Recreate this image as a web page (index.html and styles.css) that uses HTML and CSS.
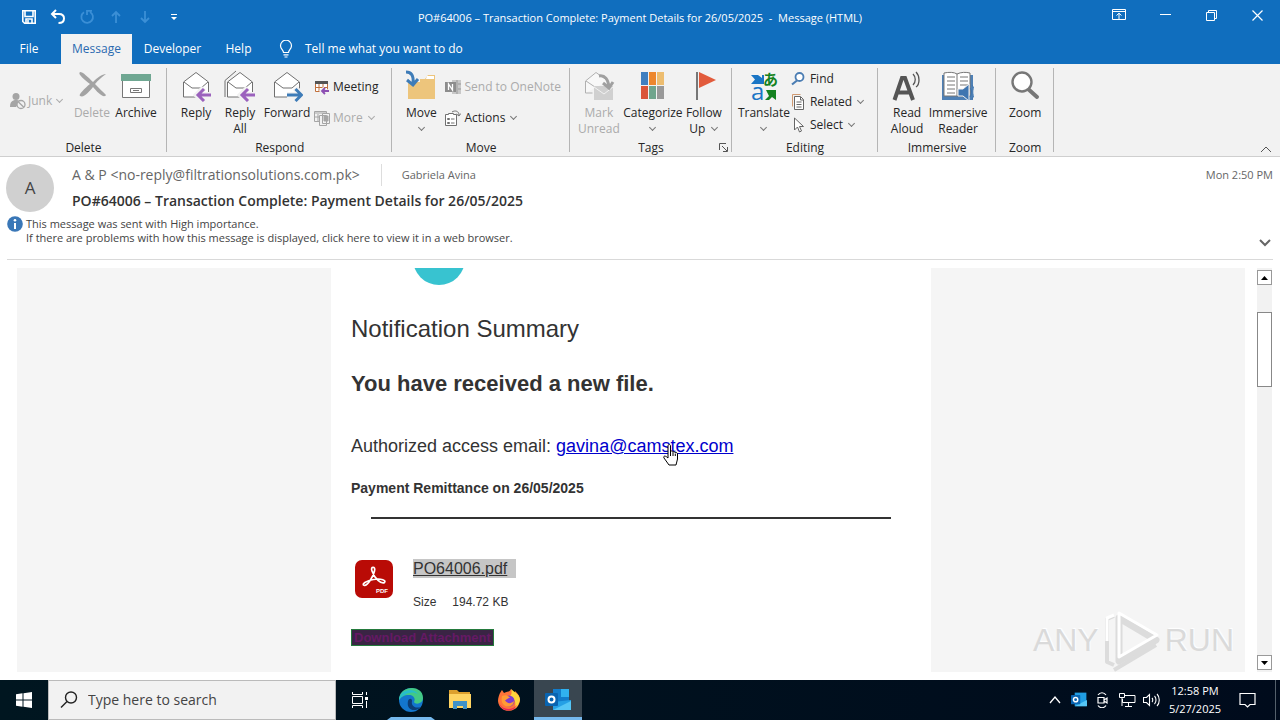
FILE: index.html
```html
<!DOCTYPE html>
<html lang="en">
<head>
<meta charset="utf-8">
<title>PO#64006 – Transaction Complete - Message (HTML)</title>
<link rel="stylesheet" href="styles.css">
</head>
<body>
<div class="window">
  <header class="titlebar">
    <div class="quick">
      <button aria-label="Save"><svg width="16" height="16" viewBox="0 0 16 16" fill="none" stroke="#fff" stroke-width="1.6"><path d="M1.8 1.8h12.4v12.4H3.6L1.8 12.4zM4 2v5.5h8V2M5 14v-4h6v4M7 11v3"/></svg></button>
      <button aria-label="Undo"><svg width="16" height="16" viewBox="0 0 16 16" fill="none" stroke="#fff" stroke-width="2"><path d="M6 1 2 5l4 4M2 5h7c3 0 5 1.800 5 4.500S12 14 8.500 14"/></svg></button>
      <button aria-label="Redo" disabled><svg width="16" height="16" viewBox="0 0 16 16" fill="none" stroke="#3b8fd6" stroke-width="1.800"><path d="M5 3.200A5.800 5.800 0 1 0 11 3M8 6V1.800h5"/></svg></button>
      <button aria-label="Previous item" disabled><svg width="16" height="16" viewBox="0 0 16 16" fill="none" stroke="#3b8fd6" stroke-width="1.800"><path d="M8 14V3M4 7l4-4 4 4"/></svg></button>
      <button aria-label="Next item" disabled><svg width="16" height="16" viewBox="0 0 16 16" fill="none" stroke="#3b8fd6" stroke-width="1.800"><path d="M8 2v11M4 9l4 4 4-4"/></svg></button>
      <button aria-label="Customize toolbar"><svg width="16" height="16" viewBox="0 0 16 16" fill="#fff"><path d="M5 5h6v1H5zM5 8h6l-3 3z"/></svg></button>
    </div>
    <h1 class="caption">PO#64006 – Transaction Complete: Payment Details for 26/05/2025 &nbsp;-&nbsp; Message (HTML)</h1>
    <div class="controls">
      <button aria-label="Ribbon display options"><svg width="14" height="12" viewBox="0 0 14 12" fill="none" stroke="#fff"><path d="M.5.5h13v10H.5zM.5 2.500h13M7 10V4.500M4.500 6.500 7 4.200l2.500 2.300"/></svg></button>
      <button aria-label="Minimize"><svg width="11" height="11" viewBox="0 0 11 11" stroke="#fff"><path d="M0 4.500h11"/></svg></button>
      <button aria-label="Restore"><svg width="11" height="11" viewBox="0 0 11 11" fill="none" stroke="#fff"><path d="M.5 2.500h8v8h-8zM2.500 2V.5h8v8H9"/></svg></button>
      <button aria-label="Close"><svg width="11" height="11" viewBox="0 0 11 11" stroke="#fff" stroke-width="1.200"><path d="m.5.5 10 10M10.500.5l-10 10"/></svg></button>
    </div>
  </header>

  <nav class="tabs">
    <button class="tab tab-file">File</button>
    <button class="tab tab-active">Message</button>
    <button class="tab tab-dev">Developer</button>
    <button class="tab tab-help">Help</button>
    <button class="tell"><svg width="14" height="18" viewBox="0 0 14 18" fill="none" stroke="#fff" stroke-width="1.200"><path d="M4.500 12.500c0-2.500-3-3.500-3-6.800a5.500 5.500 0 0 1 11 0c0 3.300-3 4.300-3 6.800zM4.500 14.800h5M5.500 17h3"/></svg><span>Tell me what you want to do</span></button>
  </nav>

  <section class="ribbon" aria-label="Ribbon">
    <div class="group">
      <div class="tools tools-delete">
        <button class="small junk" disabled><svg width="16" height="18" viewBox="0 0 16 18"><circle cx="6" cy="4.500" r="3.500" fill="#a5a5a5"/><path d="M0 15c0-5 2-7 6-7 2 0 3 .5 4 1.500L6 15z" fill="#a5a5a5"/><circle cx="11" cy="12.500" r="4" fill="#f2f2f2" stroke="#a5a5a5" stroke-width="1.300"/><path d="m8.200 9.700 5.600 5.600" stroke="#a5a5a5" stroke-width="1.300"/></svg><span>Junk</span><i class="chev"></i></button>
        <button class="big" disabled><svg width="32" height="32" viewBox="0 0 32 32"><path d="M4 2c3 0 8 5 13 10 4-4 9-8 13-8-4 3-8 6-11 10 4 4 8 8 11 11-2 4-9-3-13-8-4 5-9 11-13 9-2-1 5-8 10-12C9 10 1 4 4 2z" fill="#a3a3a3"/></svg><span>Delete</span></button>
        <button class="big"><svg width="32" height="32" viewBox="0 0 32 32"><path d="M2.500 9.500h27v18h-27z" fill="#fff" stroke="#777"/><path d="M1 4h30v7H1z" fill="#6fa792"/><path d="M10.500 18.500h11v4h-11zM13 20.500h6" fill="none" stroke="#777"/></svg><span>Archive</span></button>
      </div>
      <h2>Delete</h2>
    </div>
    <div class="group">
      <div class="tools tools-wide">
        <button class="big"><svg width="32" height="32" viewBox="0 0 32 32"><path d="M3.500 12 16 2.500 28.500 12v15h-25z" fill="#fff" stroke="#707070"/><path d="m4 12 8 6h9l7-6" fill="none" stroke="#707070"/><path d="M17 25h14M24 18l-7 7 7 7" fill="none" stroke="#f2f2f2" stroke-width="6"/><path d="M18 25h13M24 19l-6 6 6 6" fill="none" stroke="#9b62bd" stroke-width="3"/></svg><span>Reply</span></button>
        <button class="big"><svg width="32" height="32" viewBox="0 0 32 32"><path d="M1 27V10.500L12 1" fill="none" stroke="#707070"/><path d="M3.500 12 16 2.500 28.500 12v15h-25z" fill="#fff" stroke="#707070"/><path d="m4 12 8 6h9l7-6" fill="none" stroke="#707070"/><path d="M17 25h14M24 18l-7 7 7 7" fill="none" stroke="#f2f2f2" stroke-width="6"/><path d="M18 25h13M24 19l-6 6 6 6" fill="none" stroke="#9b62bd" stroke-width="3"/></svg><span>Reply<br>All</span></button>
        <button class="big big-wide"><svg width="32" height="32" viewBox="0 0 32 32"><path d="M3.500 12 16 2.500 28.500 12v15h-25z" fill="#fff" stroke="#707070"/><path d="m4 12 8 6h9l7-6" fill="none" stroke="#707070"/><path d="M16 25h14M24 18l7 7-7 7" fill="none" stroke="#f2f2f2" stroke-width="6"/><path d="M16 25h14M24.500 19l6 6-6 6" fill="none" stroke="#3e7cb8" stroke-width="3"/></svg><span>Forward</span></button>
        <div class="stack stack-two">
          <button class="small"><svg width="16" height="16" viewBox="0 0 16 16" fill="none"><path d="M1.500 3.500h12v9h-12z" fill="#fff" stroke="#c0703c"/><path d="M1 2h13v3H1z" fill="#555"/><path d="M5 5v8M9 5v8M2 8.500h11" stroke="#c0703c"/><path d="M7 12h8M10.500 9l-3 3 3 3" stroke="#f2f2f2" stroke-width="3.500"/><path d="M8 12h7M11 9l-3 3 3 3" stroke="#8c4fb3" stroke-width="1.800"/></svg><span>Meeting</span></button>
          <button class="small" disabled><svg width="16" height="16" viewBox="0 0 16 16" fill="none" stroke="#a5a5a5"><path d="M.5 1.500h12v10H.5zM1 3h11M4 4v7M1 7h11"/><path d="M5.500 5.500h7v10h-7zM8.500 3.500h7v10h-7z" fill="#f2f2f2"/><path d="M10 6h4v5h-4z" fill="#a5a5a5"/></svg><span>More</span><i class="chev"></i></button>
        </div>
      </div>
      <h2>Respond</h2>
    </div>
    <div class="group">
      <div class="tools tools-move">
        <button class="big"><svg width="32" height="32" viewBox="0 0 32 32"><path d="M15 9h5l3-4h7v24H3V12h12z" fill="#edc57c"/><path d="M22 6h7v3h-8z" fill="#fff"/><path d="M1 2c5 0 8 3 7 12M2 10l6 5 5-6" fill="none" stroke="#3e7cb8" stroke-width="3"/></svg><span>Move<i class="chev chev-below"></i></span></button>
        <div class="stack stack-two">
          <button class="small" disabled><svg width="16" height="16" viewBox="0 0 16 16"><path d="M7 1h9v14H7z" fill="#c8c8c8"/><path d="M12 1v14M13 5h3M13 10h3" stroke="#999"/><path d="M0 3h11v10H0z" fill="#8d8d8d"/><path d="M3.500 11V5l4 6V5" fill="none" stroke="#fff" stroke-width="1.300"/></svg><span>Send to OneNote</span></button>
          <button class="small"><svg width="16" height="16" viewBox="0 0 16 16" fill="none" stroke="#707070"><path d="M.5 4.500h3v-1h5v1h3v11H.5z" fill="#fff"/><path d="M2.500 8.500h2v1h-2zM2.500 12.500h2v1h-2zM6 9h3.500M6 13h3.500M7 2c3-2 7-1 7 3M11.500 4l2.500 2 1.800-2.500"/></svg><span>Actions</span><i class="chev"></i></button>
        </div>
      </div>
      <h2>Move</h2>
    </div>
    <div class="group">
      <div class="tools tools-tags">
        <button class="big big-wide" disabled><svg width="32" height="32" viewBox="0 0 32 32"><path d="M2.500 23V11L13 2.500 25 11M2.500 23h7M3 11l9 6" fill="#f8f8f8" stroke="#b0b0b0"/><path d="M11 16h19v14H11z" fill="#d0d0d0"/><path d="m11 17 10 7 9-7" fill="none" stroke="#f2f2f2"/><path d="M16 6c6-1 9 3 10 11M20 13l6 5 4-6" fill="none" stroke="#a0a0a0" stroke-width="3"/></svg><span>Mark<br>Unread</span></button>
        <button class="big big-widest"><svg width="32" height="32" viewBox="0 0 32 32"><path d="M4 2h7v13H4z" fill="#3f7fc0"/><path d="M12 2h7v13h-7z" fill="#ed872d"/><path d="M20 2h7v13h-7z" fill="#edbd70"/><path d="M4 16h7v13H4z" fill="#da5538"/><path d="M12 16h7v13h-7z" fill="#70a58d"/><path d="M20 16h7v13h-7z" fill="#999"/></svg><span>Categorize<i class="chev chev-below"></i></span></button>
        <button class="big"><svg width="32" height="32" viewBox="0 0 32 32"><path d="M9 2v28" stroke="#777" stroke-width="2"/><path d="m11 2 17 8-17 8z" fill="#e25b3c"/></svg><span>Follow<br>Up <i class="chev"></i></span></button>
      </div>
      <h2>Tags</h2>
      <button class="launcher" aria-label="Tags options"><svg width="9" height="9" viewBox="0 0 9 9" fill="none" stroke="#555"><path d="M.5 7V.5H7M3 3l5 5M8.500 4v4.500H4"/></svg></button>
    </div>
    <div class="group">
      <div class="tools tools-edit">
        <button class="big big-wide"><svg class="translate" width="32" height="32" viewBox="0 0 32 32"><path d="M3 5h7l4 3V5h2v9H3l4-4.500z" fill="#1a75c5"/><text x="3" y="30" class="glyph-latin">a</text><text x="15" y="15" class="glyph-kana">あ</text><path d="M18 20h10v10l-4-3-3 3h-4l4-4z" fill="#148220"/></svg><span>Translate<i class="chev chev-below"></i></span></button>
        <div class="stack stack-three">
          <button class="small"><svg width="16" height="16" viewBox="0 0 16 16" fill="#fff" stroke="#4b7db3"><path d="m6 9.500-5 4" stroke-width="2.200"/><circle cx="8.500" cy="6" r="4" stroke-width="1.800"/></svg><span>Find</span></button>
          <button class="small"><svg width="16" height="16" viewBox="0 0 16 16" fill="#fff"><path d="M1.500 12.500V.5h8" fill="none" stroke="#d09a72"/><path d="M3.500 2.500h6l3 3v10h-9z" stroke="#666"/><path d="M9.500 3v3h3M5.500 8h5M5.500 10.500h5M5.500 13h5" fill="none" stroke="#666"/></svg><span>Related</span><i class="chev"></i></button>
          <button class="small"><svg width="16" height="16" viewBox="0 0 16 16" fill="#fff" stroke="#666"><path d="M3.500 1v12l3-3 2 5 2-1-2-4.500h4z"/></svg><span>Select</span><i class="chev"></i></button>
        </div>
      </div>
      <h2>Editing</h2>
    </div>
    <div class="group">
      <div class="tools tools-read">
        <button class="big"><svg width="32" height="32" viewBox="0 0 32 32" fill="none" stroke="#555"><path d="M3.500 30 11 8h3l8 22M7 22.500h11" stroke-width="4"/><path d="M22 4c3 3 3 8 0 11M25 2c4 4 4 12 0 15" stroke-width="1.300"/></svg><span>Read<br>Aloud</span></button>
        <button class="big big-widest"><svg width="32" height="32" viewBox="0 0 32 32"><path d="M0 5h31v25H0z" fill="#4e80b5"/><path d="M2 3c5-1 10-1 13 1 4-2 9-2 13-1v23H2z" fill="#fff" stroke="#777"/><path d="M15 4v22M5 7h8M5 11h8M5 15h8M5 19h8M5 23h8M18 7h8M18 11h8M18 15h8" stroke="#777"/><path d="M16 19h5l6-5v17l-6-5h-5z" fill="#3e75b0" stroke="#f2f2f2"/><path d="M28 18c2 2 2 6 0 9M30 15c3 4 3 10 0 14" stroke="#3e75b0" fill="none"/></svg><span>Immersive<br>Reader</span></button>
      </div>
      <h2>Immersive</h2>
    </div>
    <div class="group">
      <div class="tools tools-zoom">
        <button class="big"><svg width="32" height="32" viewBox="0 0 32 32"><path d="m18 18 10 9" stroke="#777" stroke-width="4" stroke-linecap="round"/><circle cx="13" cy="12" r="9.500" fill="#fff" stroke="#777" stroke-width="2.400"/></svg><span>Zoom</span></button>
      </div>
      <h2>Zoom</h2>
    </div>
    <button class="collapse" aria-label="Collapse ribbon"><svg width="12" height="7" viewBox="0 0 12 7" fill="none" stroke="#555"><path d="m1 6 5-5 5 5"/></svg></button>
  </section>

  <section class="message-head">
    <div class="sender">
      <div class="avatar">A</div>
      <div class="who">
        <div class="from-row"><span class="from">A &amp; P &lt;no-reply@filtrationsolutions.com.pk&gt;</span><span class="to">Gabriela Avina</span><time>Mon 2:50 PM</time></div>
        <h2 class="subject">PO#64006 – Transaction Complete: Payment Details for 26/05/2025</h2>
      </div>
    </div>
    <div class="notice">
      <svg width="16" height="16" viewBox="0 0 16 16"><circle cx="8" cy="8" r="7.800" fill="#3a77b7"/><path d="M8 7v6" stroke="#fff" stroke-width="2"/><circle cx="8" cy="4.200" r="1.300" fill="#fff"/></svg>
      <p>This message was sent with High importance.<br>If there are problems with how this message is displayed, click here to view it in a web browser.</p>
      <button aria-label="Expand header"><svg width="12" height="8" viewBox="0 0 12 8" fill="none" stroke="#666" stroke-width="2"><path d="m1 1 5 5 5-5"/></svg></button>
    </div>
  </section>

  <main class="reading">
    <div class="canvas">
      <article class="mail">
        <div class="logo-dot"></div>
        <h2 class="mail-title">Notification Summary</h2>
        <h3 class="mail-lead">You have received a new file.</h3>
        <p class="mail-access">Authorized access email: <a href="#mail">gavina@camstex.com<svg class="pointer" width="16" height="22" viewBox="0 0 16 22"><path d="M5 12V2c0-2 2.500-2 2.500 0v6c0-1.500 2.500-1.500 2.500.5 0-1.500 2.300-1 2.300.7 0-1.200 2.200-1 2.200.8v5L13 21H6L1 14c-1-2 1-3 4 0z" fill="#fff" stroke="#000"/><path d="M7.500 8v4M10 9v3M12.300 10v2" stroke="#000"/></svg></a></p>
        <p class="mail-pay">Payment Remittance on 26/05/2025</p>
        <hr>
        <div class="file">
          <svg width="38" height="38" viewBox="0 0 38 38"><rect width="38" height="38" rx="7" fill="#b90b06"/><path d="M17 11c-2-5 4-5 2.500 0C18.500 16 13 25 9.500 25.500c-4-1 2-5 9-6 8-1.500 13 1 11 3-3 2-10-4-12.500-11.500z" fill="none" stroke="#fff" stroke-width="1.700"/><text x="21" y="33" class="pdf-mark">PDF</text></svg>
          <div>
            <div><a class="file-name" href="#file">PO64006.pdf</a></div>
            <div class="file-size"><span>Size</span><span>194.72 KB</span></div>
          </div>
        </div>
        <a class="download" href="#download">Download Attachment</a>
      </article>
    </div>
    <div class="scroll">
      <button aria-label="Scroll up"><svg width="7" height="4" viewBox="0 0 7 4"><path d="M0 4h7L3.500 0z"/></svg></button>
      <div class="track"><div class="thumb"></div></div>
      <button aria-label="Scroll down"><svg width="7" height="4" viewBox="0 0 7 4"><path d="M0 0h7L3.500 4z"/></svg></button>
    </div>
    <div class="watermark" aria-hidden="true"><span>ANY</span><svg width="60" height="64" viewBox="0 0 60 64" fill="none" stroke-linejoin="round"><path d="M17 10 54 32 17 53z" stroke="#dcdcdc" stroke-width="7"/><path d="M17 5 55 27 17 49z" stroke="#fff" stroke-width="3"/><path d="M12 8 5 11v43l7 3M12 62l42-25" stroke="#dcdcdc" stroke-width="4"/><path d="M12 7 5 10v23" stroke="#fff" stroke-width="3"/></svg><span>RUN</span></div>
  </main>

  <footer class="taskbar">
    <button class="task" aria-label="Start"><svg width="16" height="16" viewBox="0 0 16 16" fill="#fff"><path d="M0 2.300 6.500 1.300v6.200H0zM7.500 1.200 16 0v7.500H7.500zM0 8.500h6.500v6.200L0 13.700zM7.500 8.500H16V16l-8.500-1.200z"/></svg></button>
    <label class="search"><svg width="18" height="18" viewBox="0 0 18 18" fill="none" stroke="#222" stroke-width="1.400"><circle cx="11" cy="6.500" r="5.500"/><path d="m7 10.500-6 6"/></svg><input type="text" placeholder="Type here to search" aria-label="Search"></label>
    <button class="task" aria-label="Task view"><svg width="17" height="16" viewBox="0 0 17 16" fill="none" stroke="#fff"><path d="M.5 4.500h10v7H.5zM.5 0v2.500h10V0M.5 16v-2.500h10V16M14.500 0v3M14.500 9v7"/><path d="M13 5h3v3h-3z" fill="#fff" stroke="none"/></svg></button>
    <button class="task task-open edge" aria-label="Edge"><svg width="26" height="26" viewBox="0 0 26 26"><circle cx="13" cy="13" r="12" fill="#1376cd"/><path d="M1 13C1-2 25-3 25 11c0 6-8 7-9 4 2-4-1-7-5-7-5 0-8 2-10 5z" fill="#42c986"/><path d="M1 13C2 2 15 0 20 7 14 3 5 7 1 13z" fill="#26bccb"/><path d="M10 14c-2 9 7 12 13 6-7 2-10-2-9-6 0-3-3-3-4 0z" fill="#0c3d75"/></svg></button>
    <button class="task" aria-label="File Explorer"><svg width="24" height="22" viewBox="0 0 24 22"><path d="M1 1h8l2 2h11v16H1z" fill="#dda02d"/><path d="M1 5h22v14H1z" fill="#ffd462"/><path d="M5 20v-8h14v8h-4v-3H9v3z" fill="#3e91c9"/></svg></button>
    <button class="task" aria-label="Firefox"><svg width="24" height="24" viewBox="0 0 24 24"><path d="M3 5c1-1 1-2 2-3l2 3c3-2 5 0 7-4 1 2 2 3 4 4V3c5 4 6 9 4 13-4 10-20 9-21-3C1 10 2 7 3 5z" fill="#ff7339"/><path d="M14 1c3 3 9 5 9 11-1 4-3 7-5 8 2-8-3-11-6-11 3-2 3-5 2-8z" fill="#ffd43b"/><circle cx="12" cy="13" r="5.500" fill="#803ccf"/><path d="M5 8c4-2 7 0 8 2-3 0-3 2-5 2 2 4 6 4 9 1-1 9-15 7-12-5z" fill="#ff9b35"/><path d="M2 15c3 7 13 8 18 2-3 7-15 8-18-2z" fill="#e9285c"/></svg></button>
    <button class="task task-open task-current" aria-label="Outlook"><svg width="26" height="24" viewBox="0 0 26 24"><path d="M8 1h16v16H8z" fill="#127ccb"/><path d="M16 1h8v8h-8z" fill="#30b1ef"/><path d="M8 14 26 12v10H8z" fill="#24a0e5"/><path d="m8 22 18-9v9z" fill="#55c6f5"/><rect y="5" width="13" height="13" rx="1" fill="#0964b0"/><circle cx="6.500" cy="11.500" r="3" fill="none" stroke="#fff" stroke-width="2"/></svg></button>
    <div class="tray">
      <button aria-label="Show hidden icons"><svg width="12" height="8" viewBox="0 0 12 8" fill="none" stroke="#fff" stroke-width="1.300"><path d="m1 7 5-6 5 6"/></svg></button>
      <button aria-label="Outlook notifications"><svg width="16" height="16" viewBox="0 0 26 24"><path d="M6 0h19v22H6z" fill="#209de2"/><path d="m6 22 20-10v10z" fill="#55c6f5"/><rect y="4" width="15" height="15" rx="1" fill="#0964b0"/><circle cx="7.500" cy="11.500" r="3.500" fill="none" stroke="#fff" stroke-width="2.400"/></svg></button>
      <button aria-label="Meet now"><svg width="14" height="16" viewBox="0 0 14 16" fill="none" stroke="#fff" stroke-width="1.200"><path d="M2 5.500h6v5.500H2zM8 8l3-2v5L8 9M2 3c2-3 6-3 8 0M2 13.500c2 3 6 3 8 0"/></svg></button>
      <button aria-label="Network"><svg width="17" height="14" viewBox="0 0 17 14" fill="none" stroke="#fff"><path d="M5 2.500h11v7H3.500V6M.5.5h5v4h-5zM3 5v8M9.500 10v3M6 13.500h7"/></svg></button>
      <button aria-label="Volume"><svg width="17" height="14" viewBox="0 0 17 14" fill="none" stroke="#fff" stroke-width="1.100"><path d="M.5 4.500h3l3-3v11l-3-3h-3zM9 5c1 1 1 3 0 4M11.500 3c2 2 2 6 0 8M14 1c3 3 3 9 0 12"/></svg></button>
      <div class="clock"><time>12:58 PM</time><time>5/27/2025</time></div>
      <button class="alerts" aria-label="Notifications"><svg width="17" height="17" viewBox="0 0 17 17" fill="none" stroke="#fff" stroke-width="1.200"><path d="M1 1.500h15v11h-5L8.500 15 6 12.500H1z"/></svg></button>
      <span class="desktop-edge"></span>
    </div>
  </footer>
</div>
</body>
</html>
```
FILE: styles.css
```css
* { box-sizing: border-box; }
body { margin: 0; font: 12px/16px "Open Sans", "Noto Sans", sans-serif; color: #262626; background: #fff; }
button { margin: 0; padding: 0; border: 0; background: none; font: inherit; color: inherit; }
h1, h2, h3, p { margin: 0; font: inherit; }
svg { display: block; flex: none; }
.window { display: flex; flex-direction: column; height: 100vh; min-height: 600px; overflow: hidden; }

.titlebar { display: grid; grid-template-columns: 1fr auto 1fr; align-items: center; height: 34px; background: #106ebe; color: #fff; }
.quick { display: flex; gap: 13px; padding-left: 21px; }
.caption { padding-top: 2px; font-size: 11px; white-space: pre; }
.controls { display: flex; justify-content: flex-end; height: 30px; margin-bottom: 4px; }
.controls button { display: grid; place-items: center; width: 46px; }

.tabs { display: flex; height: 30px; background: #106ebe; color: #fff; }
.tab { text-align: center; }
.tab-file { width: 58px; margin-right: 3px; }
.tab-active { width: 71px; background: #f2f2f2; color: #2a6ab0; }
.tab-dev { width: 81px; }
.tab-help { width: 51px; }
.tell { display: flex; align-items: center; gap: 12px; margin-left: 15px; }

.ribbon { position: relative; display: flex; height: 93px; background: #f2f2f2; border-bottom: 1px solid #cfcfcf; }
.group { position: relative; display: flex; flex-direction: column; justify-content: space-between; flex: none; }
.group::after { content: ""; position: absolute; right: 0; top: 4px; bottom: 4px; width: 1px; background: #b5b5b5; }
.group h2 { text-align: center; line-height: 16px; }
.tools { display: flex; padding: 6px 14px 0 7px; }
.tools-delete { padding: 6px 9px 0 10px; }
.tools-move { padding-right: 9px; }
.tools-tags { padding: 6px 6px 0 4px; }
.tools-edit { padding-right: 13px; }
.tools-read { padding: 6px 9px 0 7px; }
.tools-zoom { padding: 6px 7px 0; }
.big { display: flex; flex-direction: column; align-items: center; gap: 3px; width: 44px; white-space: nowrap; }
.big-wide { width: 50px; }
.big-widest { width: 58px; }
.small { display: flex; align-items: center; gap: 3px; height: 20px; white-space: nowrap; }
.junk { width: 60px; margin-top: 21px; gap: 2px; }
button:disabled { color: #ababab; }
.stack { display: flex; flex-direction: column; padding-left: 2px; }
.stack-two { gap: 11px; padding-top: 7px; }
.stack-three { gap: 3px; margin-top: -1px; }
.chev { display: inline-block; width: 5px; height: 5px; margin: 0 2px 3px 3px; border: solid #777; border-width: 0 1px 1px 0; transform: rotate(45deg); }
.chev-below { display: block; margin: 4px auto 0; }
button:disabled .chev { border-color: #ababab; }
.launcher { position: absolute; right: 4px; bottom: 4px; }
.collapse { position: absolute; right: 8px; bottom: 3px; }
.translate { overflow: visible; }
.glyph-latin { font: 24px "Open Sans", sans-serif; fill: #1a75c5; }
.glyph-kana { font: bold 15px "Noto Sans CJK JP", sans-serif; fill: #148220; }

.message-head { display: flex; flex-direction: column; height: 103px; margin: 0 7px; padding-top: 7px; border-bottom: 1px solid #d9d9d9; color: #444; }
.sender { display: flex; gap: 18px; margin-left: -1px; }
.avatar { display: grid; place-items: center; flex: none; width: 48px; height: 48px; border-radius: 50%; background: #d0d0d0; font-size: 17px; }
.who { flex: 1; }
.from-row { display: flex; align-items: center; height: 22px; color: #666; }
.from { padding-right: 21px; border-right: 1px solid #ddd; font-size: 14px; line-height: 22px; }
.to { padding-left: 20px; font-size: 11px; }
.from-row time { margin-left: auto; font-size: 11px; }
.subject { margin-top: 5px; font-size: 14px; font-weight: 600; line-height: 20px; color: #333; }
.notice { display: flex; gap: 3px; margin-top: 4px; font-size: 11px; line-height: 14px; }
.notice p { flex: 1; margin-top: 1px; }
.notice button { margin: 23px 2px 0 0; }

.reading { position: relative; display: flex; flex: 1; min-height: 0; gap: 12px; padding: 8px 8px 8px 17px; background: #fff; }
.canvas { flex: 1; overflow: hidden; background: #f5f5f5; }
.mail { width: 100%; max-width: 600px; height: 100%; margin: 0 auto; padding: 0 20px; overflow: hidden; background: #fff; font-family: "Liberation Sans", Arial, sans-serif; color: #333; }
.logo-dot { width: 52px; height: 52px; margin: -35px 0 0 62px; border-radius: 50%; background: #38c3d0; }
.mail-title { margin-top: 30px; font-size: 24px; line-height: 28px; }
.mail-lead { margin-top: 27px; font-size: 22px; font-weight: bold; line-height: 28px; }
.mail-access { margin-top: 36px; font-size: 18px; line-height: 24px; }
.mail-access a { position: relative; color: #00c; }
.pointer { position: absolute; left: 107px; top: 8px; }
.mail-pay { margin-top: 22px; font-size: 14px; font-weight: bold; line-height: 16px; }
.mail hr { height: 2px; margin: 21px 20px 40px; border: 0; background: #333; }
.file { display: flex; gap: 20px; padding: 0 4px; }
.file > svg { margin-top: 1px; }
.file-name { display: inline-block; padding-right: 9px; background: #c6c6c6; font-size: 16px; line-height: 19px; color: #333; }
.file-size { display: flex; gap: 16px; margin-top: 16px; font-size: 12px; }
.pdf-mark { font: bold 6px "Liberation Sans", sans-serif; fill: #fff; }
.download { display: inline-block; margin-top: 19px; padding: 0 2px; border: 1px solid #247a3c; background: #3a2444; font-size: 13px; font-weight: bold; line-height: 15px; color: #651964; text-decoration: none; }
.scroll { display: flex; flex-direction: column; width: 15px; padding: 2px 0; background: #f2f2f2; }
.scroll button { display: grid; place-items: center; height: 15px; border: 1px solid #999; background: #fff; }
.track { flex: 1; padding-top: 27px; }
.thumb { height: 75px; border: 1px solid #888; background: #fff; }
.watermark { position: absolute; right: 46px; bottom: 8px; display: flex; align-items: center; gap: 3px; font: 32px/40px "Liberation Sans", sans-serif; color: #dadada; text-shadow: 1px -1px 1px #fff; }

.taskbar { display: flex; height: 40px; flex: none; background: #00141f linear-gradient(90deg, #001620, #000b1c); color: #fff; }
.task { display: grid; place-items: center; width: 48px; margin-right: 1px; }
.task:first-child { margin-right: 0; }
.task-open { border-bottom: 3px solid #76b9ed; padding-top: 3px; }
.edge { margin: 0 1px 0 2px; width: 48px; border-left: 4px solid transparent; border-right: 4px solid transparent; }
.task-current { background: #394650; }
.search { display: flex; align-items: center; gap: 10px; width: 288px; padding-left: 11px; border: 1px solid #bbb; background: #f2f2f2; }
.search input { flex: 1; min-width: 0; padding: 0; border: 0; outline: 0; background: none; font: 14px/20px "Open Sans", "Noto Sans", sans-serif; }
.search input::placeholder { color: #444; opacity: 1; }
.tray { display: flex; align-items: center; margin-left: auto; }
.tray button { display: grid; place-items: center; width: 24px; height: 40px; }
.clock { display: flex; flex-direction: column; align-items: center; width: 64px; font-size: 11px; line-height: 18px; }
.tray .alerts { width: 40px; margin-right: 8px; }
.desktop-edge { width: 5px; height: 40px; border-left: 1px solid #54606b; }
```
